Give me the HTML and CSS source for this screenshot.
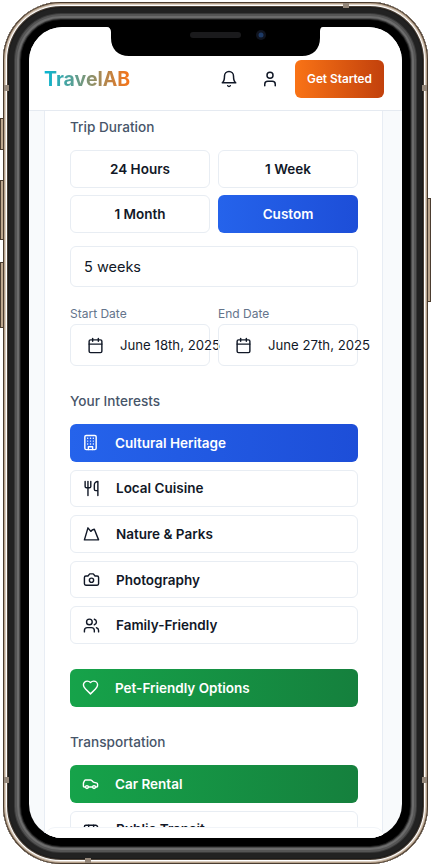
FILE: index.html
```html
<!DOCTYPE html>
<html lang="en">
<head>
    <meta charset="UTF-8">
    <meta name="viewport" content="width=device-width, initial-scale=1.0">
    <title>TravelAB - Plan your trip</title>
    <link rel="stylesheet" href="styles.css">
</head>
<body>
    <div class="phone">
        <span class="side-btn left-a"></span>
        <span class="side-btn left-b"></span>
        <span class="side-btn left-c"></span>
        <span class="side-btn right-a"></span>
        <span class="band band-h band-tl"></span>
        <span class="band band-h band-tr"></span>
        <span class="band band-h band-bl"></span>
        <span class="band band-h band-br"></span>
        <span class="band band-v band-top"></span>
        <span class="band band-v band-bottom"></span>

        <div class="screen">
            <svg class="notch" width="216" height="30" viewBox="0 0 216 30">
                <path d="M0 0h216c-2.5 0-3 2-3 5v6c0 11-7 18-18 18H22C11 29 4 22 4 11V5C4 2 2.5 0 0 0z" fill="#000"/>
                <rect x="83" y="5" width="51" height="6" rx="3" fill="#1a1a1c"/>
                <circle cx="154" cy="8" r="5" fill="#10141f"/>
                <circle cx="154" cy="8" r="2.5" fill="#1d3a66"/>
            </svg>

            <header class="topbar">
                <div class="logo">TravelAB</div>
                <div class="topbar-actions">
                    <svg class="ico bell" viewBox="0 0 24 24"><path d="M6 8a6 6 0 0 1 12 0c0 7 3 9 3 9H3s3-2 3-9"/><path d="M10.3 21a1.94 1.94 0 0 0 3.4 0"/></svg>
                    <svg class="ico user" viewBox="0 0 24 24"><path d="M19 21v-2a4 4 0 0 0-4-4H9a4 4 0 0 0-4 4v2"/><circle cx="12" cy="7" r="4"/></svg>
                    <button class="cta">Get Started</button>
                </div>
            </header>

            <main class="content">
                <section class="card">
                    <h3 class="label">Trip Duration</h3>
                    <div class="duration-grid">
                        <button class="opt">24 Hours</button>
                        <button class="opt">1 Week</button>
                        <button class="opt">1 Month</button>
                        <button class="opt blue">Custom</button>
                    </div>
                    <div class="text-input">5 weeks</div>

                    <div class="date-row">
                        <div class="date-col">
                            <div class="date-label">Start Date</div>
                            <div class="date-input">
                                <svg class="ico" viewBox="0 0 24 24"><path d="M8 2v4"/><path d="M16 2v4"/><rect x="3" y="4" width="18" height="18" rx="2"/><path d="M3 10h18"/></svg>
                                <span>June 18th, 2025</span>
                            </div>
                        </div>
                        <div class="date-col">
                            <div class="date-label">End Date</div>
                            <div class="date-input">
                                <svg class="ico" viewBox="0 0 24 24"><path d="M8 2v4"/><path d="M16 2v4"/><rect x="3" y="4" width="18" height="18" rx="2"/><path d="M3 10h18"/></svg>
                                <span>June 27th, 2025</span>
                            </div>
                        </div>
                    </div>

                    <h3 class="label interests-label">Your Interests</h3>
                    <div class="list">
                        <button class="row blue">
                            <svg class="ico" viewBox="0 0 24 24"><rect x="4" y="2" width="16" height="20" rx="2"/><path d="M9 22v-4h6v4"/><path d="M8 6h.01M12 6h.01M16 6h.01M8 10h.01M12 10h.01M16 10h.01M8 14h.01M12 14h.01M16 14h.01"/></svg>
                            Cultural Heritage
                        </button>
                        <button class="row">
                            <svg class="ico" viewBox="0 0 24 24"><path d="M3 2v7c0 1.1.9 2 2 2h4a2 2 0 0 0 2-2V2"/><path d="M7 2v20"/><path d="M21 15V2a5 5 0 0 0-5 5v6c0 1.1.9 2 2 2h3Zm0 0v7"/></svg>
                            Local Cuisine
                        </button>
                        <button class="row">
                            <svg class="ico" viewBox="0 0 24 24"><path d="M2 21 7 4l4 5 2-2 3-1 6 15H2z"/></svg>
                            Nature &amp; Parks
                        </button>
                        <button class="row">
                            <svg class="ico" viewBox="0 0 24 24"><path d="M14.5 4h-5L7 7H4a2 2 0 0 0-2 2v9a2 2 0 0 0 2 2h16a2 2 0 0 0 2-2V9a2 2 0 0 0-2-2h-3l-2.5-3z"/><circle cx="12" cy="13" r="3"/></svg>
                            Photography
                        </button>
                        <button class="row">
                            <svg class="ico" viewBox="0 0 24 24"><path d="M16 21v-2a4 4 0 0 0-4-4H6a4 4 0 0 0-4 4v2"/><circle cx="9" cy="7" r="4"/><path d="M22 21v-2a4 4 0 0 0-3-3.87"/><path d="M16 3.13a4 4 0 0 1 0 7.75"/></svg>
                            Family-Friendly
                        </button>
                    </div>

                    <button class="row green pet">
                        <svg class="ico" viewBox="0 0 24 24"><path d="M19 14c1.49-1.46 3-3.21 3-5.5A5.5 5.5 0 0 0 16.5 3c-1.76 0-3 .5-4.5 2-1.5-1.5-2.74-2-4.5-2A5.5 5.5 0 0 0 2 8.5c0 2.3 1.5 4.05 3 5.5l7 7Z"/></svg>
                        Pet-Friendly Options
                    </button>

                    <h3 class="label transport-label">Transportation</h3>
                    <div class="list">
                        <button class="row green">
                            <svg class="ico" viewBox="0 0 24 24"><path d="M19 17h2c.6 0 1-.4 1-1v-3c0-.9-.7-1.7-1.5-1.9C18.7 10.6 16 10 16 10s-1.3-1.4-2.2-2.3c-.5-.4-1.1-.7-1.8-.7H5c-.6 0-1.1.4-1.4.9l-1.4 2.9A3.7 3.7 0 0 0 2 12v4c0 .6.4 1 1 1h2"/><circle cx="7" cy="17" r="2"/><path d="M9 17h6"/><circle cx="17" cy="17" r="2"/></svg>
                            Car Rental
                        </button>
                        <button class="row">
                            <svg class="ico" viewBox="0 0 24 24"><path d="M8 6v6M15 6v6M2 12h19.6"/><path d="M18 18h3s.5-1.7.8-2.8c.1-.4.2-.8.2-1.2 0-.4-.1-.8-.2-1.2l-1.4-5C20.1 6.8 19.1 6 18 6H4a2 2 0 0 0-2 2v10h3"/><circle cx="7" cy="18" r="2"/><path d="M9 18h5"/><circle cx="16" cy="18" r="2"/></svg>
                            Public Transit
                        </button>
                    </div>
                </section>
            </main>

            <div class="bottom-sheet"></div>
        </div>
    </div>
</body>
</html>
```

FILE: styles.css
```css
* {
    box-sizing: border-box;
}
body {
    margin: 0;
    padding: 0;
    background: #fff;
    overflow: hidden;
    font-family: Inter, "Liberation Sans", sans-serif;
    color: #111827;
}

/* device frame */
.phone {
    position: relative;
    width: 425px;
    height: 862px;
    margin: 2px 0 0 3px;
    padding: 25px 26px 26px;
    border-radius: 58px;
    background: #000;
    box-shadow:
        inset 0 0 0 1px #4b3d30,
        inset 0 0 0 2px #b7a28c,
        inset 0 0 0 3px #dcd0c3,
        inset 0 0 0 4px #fff,
        inset 0 0 0 5px #4a3f35,
        inset 0 0 0 6px #1b1b1b,
        inset 0 0 0 11px #222,
        inset 0 0 0 12px #3a3a3a,
        inset 0 0 0 14px #555,
        inset 0 0 0 16px #6c6c6c,
        inset 0 0 0 17px #4a4a4a,
        inset 0 0 0 18px #1c1c1c;
}
.side-btn {
    position: absolute;
    width: 4px;
    background: #bda78f;
    border: 1px solid #4b3d30;
}
.left-a { left: -3px; top: 116px; height: 32px; }
.left-b { left: -3px; top: 178px; height: 60px; }
.left-c { left: -3px; top: 260px; height: 66px; }
.right-a { right: -3px; top: 196px; height: 104px; }
.band {
    position: absolute;
    background: #94877a;
}
.band-h { width: 5px; height: 6px; }
.band-v { width: 6px; height: 5px; }
.band-tl { left: 1px; top: 83px; }
.band-tr { right: 1px; top: 83px; }
.band-bl { left: 1px; top: 775px; }
.band-br { right: 1px; top: 775px; }
.band-top { left: 340px; top: 1px; }
.band-bottom { left: 82px; bottom: 1px; }

.screen {
    position: relative;
    display: flex;
    flex-direction: column;
    height: 100%;
    border-radius: 34px;
    overflow: hidden;
    background: #f8fafc;
}
.notch {
    position: absolute;
    top: 0;
    left: 78px;
    z-index: 5;
}

.ico {
    flex: none;
    width: 17px;
    height: 17px;
    fill: none;
    stroke: currentColor;
    stroke-width: 2;
    stroke-linecap: round;
    stroke-linejoin: round;
}

/* header */
.topbar {
    display: flex;
    align-items: center;
    justify-content: space-between;
    flex: none;
    height: 84px;
    padding: 33px 18px 12px 15px;
    background: #fff;
    border-bottom: 1px solid #e5eaf1;
}
.logo {
    font-size: 19.5px;
    font-weight: 700;
    background: linear-gradient(to right, #06b6d4, #f97316);
    -webkit-background-clip: text;
    background-clip: text;
    color: transparent;
}
.topbar-actions {
    display: flex;
    align-items: center;
}
.bell, .user {
    width: 18px;
    height: 18px;
}
.bell { margin-right: 23.5px; }
.user { margin-right: 16px; }
.cta {
    width: 89px;
    height: 38px;
    padding: 0;
    border: 0;
    border-radius: 6px;
    background: linear-gradient(to right, #f97316, #c2410c);
    color: #fff;
    font: 600 11.8px Inter, sans-serif;
}

/* form */
.content {
    flex: 1;
    min-height: 0;
    padding: 0 19px 0 15px;
    overflow: hidden;
}
.card {
    padding: 6px 24px 0 25px;
    background: #fff;
    border-left: 1px solid #e8edf4;
    border-right: 1px solid #e8edf4;
}
.label {
    margin: 0;
    font-size: 13.6px;
    font-weight: 500;
    line-height: 20px;
    color: #475569;
}
.duration-grid {
    display: grid;
    grid-template-columns: 1fr 1fr;
    gap: 7px 8px;
    margin-top: 13px;
}
.opt, .row {
    height: 38px;
    border: 1px solid #e8edf3;
    border-radius: 6px;
    background: #fff;
    color: #111827;
    font: 600 13.5px Inter, sans-serif;
}
.opt { padding: 0; }
.row {
    display: flex;
    align-items: center;
    gap: 16px;
    width: 100%;
    height: 37.6px;
    padding: 0 0 0 12px;
    text-align: left;
}
.blue {
    border: 0;
    background: linear-gradient(to right, #2563eb, #1d4ed8);
    color: #fff;
}
.green {
    border: 0;
    background: linear-gradient(to right, #16a34a, #15803d);
    color: #fff;
}
.text-input {
    display: flex;
    align-items: center;
    height: 41px;
    margin-top: 13px;
    padding-left: 13px;
    border: 1px solid #e8edf3;
    border-radius: 6px;
    font-size: 14.5px;
}
.date-row {
    display: grid;
    grid-template-columns: minmax(0, 1fr) minmax(0, 1fr);
    gap: 8px;
    margin-top: 18px;
}
.date-label {
    font-size: 12px;
    line-height: 17px;
    color: #64748b;
}
.date-input {
    display: flex;
    align-items: center;
    gap: 16px;
    height: 42px;
    margin-top: 2px;
    padding-left: 16px;
    border: 1px solid #e8edf3;
    border-radius: 6px;
    font-size: 13.2px;
    white-space: nowrap;
}
.interests-label { margin-top: 25px; }
.list {
    display: flex;
    flex-direction: column;
    gap: 8px;
    margin-top: 13px;
}
.pet {
    margin-top: 25px;
    height: 38px;
}
.transport-label { margin-top: 25px; }

.bottom-sheet {
    position: absolute;
    left: 16px;
    right: 18px;
    bottom: 0;
    height: 10px;
    border-radius: 10px 10px 0 0;
    background: #fff;
    box-shadow: 0 -1px 0 #f1f4f8;
}
```
